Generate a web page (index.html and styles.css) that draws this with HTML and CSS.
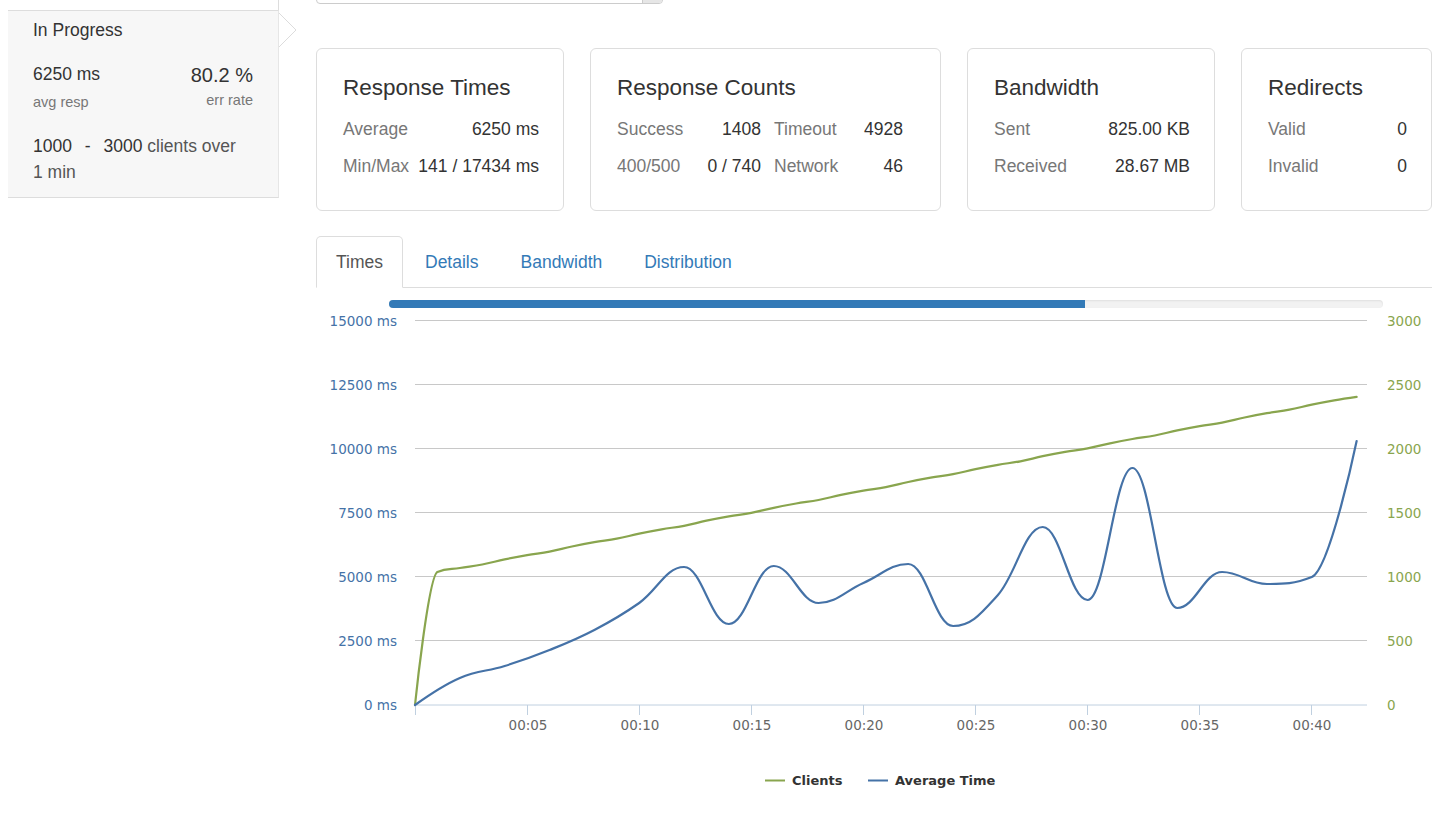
FILE: index.html
```html
<!DOCTYPE html>
<html lang="en">
<head>
<meta charset="utf-8">
<title>Load test – In Progress</title>
<link rel="stylesheet" href="styles.css">
</head>
<body>
<div class="page">
  <aside class="sidebar">
    <div class="test-item test-item--prev"></div>
    <div class="test-item test-item--active">
      <div class="test-status">In Progress</div>
      <div class="test-stats">
        <div class="stat">
          <div class="stat-value">6250 ms</div>
          <div class="stat-label">avg resp</div>
        </div>
        <div class="stat stat--right">
          <div class="stat-value stat-value--big">80.2 %</div>
          <div class="stat-label stat-label--right">err rate</div>
        </div>
      </div>
      <div class="test-clients"><span class="num">1000</span> <span class="dash">-</span> <span class="num">3000</span> <span class="muted">clients over</span> <span class="muted">1&nbsp;min</span></div>
      <svg class="chevron" width="20" height="38" viewBox="0 0 20 38"><polyline points="1,0 18,17 1,34" fill="#fff" stroke="#dcdcdc" stroke-width="1"/></svg>
    </div>
  </aside>

  <main class="main">
    <div class="search"><span class="search-btn"></span></div>

    <section class="cards">
      <div class="card">
        <h3 class="card-title">Response Times</h3>
        <div class="card-grid">
          <span class="label">Average</span><span class="value">6250 ms</span>
          <span class="label">Min/Max</span><span class="value">141 / 17434 ms</span>
        </div>
      </div>
      <div class="card card--counts">
        <h3 class="card-title">Response Counts</h3>
        <div class="card-grid card-grid--counts">
          <span class="label">Success</span><span class="value">1408</span>
          <span class="label label--pad">Timeout</span><span class="value">4928</span>
          <span class="label">400/500</span><span class="value">0 / 740</span>
          <span class="label label--pad">Network</span><span class="value">46</span>
        </div>
      </div>
      <div class="card">
        <h3 class="card-title">Bandwidth</h3>
        <div class="card-grid">
          <span class="label">Sent</span><span class="value">825.00 KB</span>
          <span class="label">Received</span><span class="value">28.67 MB</span>
        </div>
      </div>
      <div class="card">
        <h3 class="card-title">Redirects</h3>
        <div class="card-grid">
          <span class="label">Valid</span><span class="value">0</span>
          <span class="label">Invalid</span><span class="value">0</span>
        </div>
      </div>
    </section>

    <ul class="tabs">
      <li class="tab"><a class="tab-link tab-link--active" href="#">Times</a></li>
      <li class="tab"><a class="tab-link" href="#">Details</a></li>
      <li class="tab"><a class="tab-link" href="#">Bandwidth</a></li>
      <li class="tab"><a class="tab-link" href="#">Distribution</a></li>
    </ul>

    <div class="progress"><div class="progress-bar" style="width:70%"></div></div>

    <svg class="chart" width="1116" height="500" viewBox="316 308 1116 500">
      <g class="grid" stroke="#c8c8c8" stroke-width="1" fill="none">
        <path d="M415 320.5H1367M415 384.5H1367M415 448.5H1367M415 512.5H1367M415 576.5H1367M415 640.5H1367"/>
      </g>
      <g class="xaxis" stroke="#c0d0e0" stroke-width="1" fill="none">
        <path d="M415 705H1367"/>
        <path d="M415.5 705V715M527.5 705V715M639.5 705V715M751.5 705V715M863.5 705V715M975.5 705V715M1087.5 705V715M1199.5 705V715M1311.5 705V715"/>
      </g>
      <g class="axis-labels" fill="#4572a7" text-anchor="end">
        <text x="397" y="325.7">15000 ms</text>
        <text x="397" y="389.7">12500 ms</text>
        <text x="397" y="453.7">10000 ms</text>
        <text x="397" y="517.7">7500 ms</text>
        <text x="397" y="581.7">5000 ms</text>
        <text x="397" y="645.7">2500 ms</text>
        <text x="397" y="709.7">0 ms</text>
      </g>
      <g class="axis-labels" fill="#89a54e">
        <text x="1387" y="325.7">3000</text>
        <text x="1387" y="389.7">2500</text>
        <text x="1387" y="453.7">2000</text>
        <text x="1387" y="517.7">1500</text>
        <text x="1387" y="581.7">1000</text>
        <text x="1387" y="645.7">500</text>
        <text x="1387" y="709.7">0</text>
      </g>
      <g class="axis-labels" fill="#666" text-anchor="middle">
        <text x="528" y="730">00:05</text>
        <text x="640" y="730">00:10</text>
        <text x="752" y="730">00:15</text>
        <text x="864" y="730">00:20</text>
        <text x="976" y="730">00:25</text>
        <text x="1088" y="730">00:30</text>
        <text x="1200" y="730">00:35</text>
        <text x="1312" y="730">00:40</text>
      </g>
      <path id="clients" class="series" stroke="#89a54e" d=""/>
      <path id="avg" class="series" stroke="#4572a7" d=""/>
      <g class="legend">
        <path d="M765 780.5H785" stroke="#89a54e" stroke-width="2"/>
        <text x="792" y="785">Clients</text>
        <path d="M868 780.5H888" stroke="#4572a7" stroke-width="2"/>
        <text x="895" y="785">Average Time</text>
      </g>
    </svg>
  </main>
</div>
<script src="script.js"></script>
</body>
</html>
```

FILE: styles.css
```css
* { box-sizing: border-box; }
html, body { margin: 0; padding: 0; overflow: hidden; }
body {
  font-family: "Liberation Sans", Arial, Helvetica, sans-serif;
  font-size: 17.5px;
  color: #333;
  background: #fff;
}
.page {
  display: flex;
  align-items: flex-start;
  gap: 37px;
  padding-left: 8px;
}

/* sidebar */
.sidebar { width: 271px; flex: none; }
.test-item--prev { height: 10px; border-right: 1px solid #ddd; }
.test-item--active {
  position: relative;
  background: #f7f7f7;
  border-top: 1px solid #ddd;
  border-bottom: 1px solid #ddd;
  border-right: 1px solid #e6e6e6;
  padding: 6.5px 25px 12px 25px;
}
.test-status { line-height: 25px; }
.test-stats {
  display: flex;
  justify-content: space-between;
  margin-top: 19px;
}
.stat-value { line-height: 25px; }
.stat-value--big { font-size: 20px; padding-top: 1.4px; }
.stat-label {
  font-size: 14.5px;
  line-height: 20px;
  color: #777;
  margin-top: 5.8px;
}
.stat-label--right { text-align: right; margin-top: 2.4px; }
.test-clients {
  margin-top: 20.3px;
  line-height: 26px;
  color: #333;
}
.test-clients .muted { color: #555; }
.test-clients .dash { margin: 0 8px; }
.chevron {
  position: absolute;
  left: 100%;
  top: 2px;
  display: block;
}

/* main */
.main { width: 1116px; flex: none; }
.search {
  width: 347px;
  height: 34px;
  margin-top: -30px;
  border: 1px solid #ccc;
  border-radius: 4px;
  display: flex;
  justify-content: flex-end;
  background: #fff;
}
.search-btn {
  width: 20px;
  background: #e6e6e6;
  border-left: 1px solid #ccc;
  border-radius: 0 3px 3px 0;
}

.cards {
  display: grid;
  grid-template-columns: 248px 351px 248px 191px;
  gap: 26px;
  margin-top: 44px;
}
.card {
  border: 1px solid #ddd;
  border-radius: 6px;
  padding: 25.5px 24px 25.5px 26px;
}
.card--counts { padding-right: 37px; }
.card-title {
  margin: 0 0 11px;
  font-size: 22.5px;
  line-height: 25px;
  font-weight: normal;
  color: #333;
}
.card-grid {
  display: grid;
  grid-template-columns: 1fr auto;
  line-height: 37px;
  white-space: nowrap;
}
.card-grid--counts { grid-template-columns: 81px 63px 91px 51px; }
.label { color: #777; }
.label--pad { padding-left: 13px; }
.value { text-align: right; color: #333; }

/* tabs */
.tabs {
  list-style: none;
  margin: 25px 0 0;
  padding: 0;
  display: flex;
  border-bottom: 1px solid #ddd;
}
.tab { margin-right: 2px; margin-bottom: -1px; }
.tab-link {
  display: block;
  padding: 12.5px 19px;
  line-height: 25px;
  border: 1px solid transparent;
  border-radius: 5px 5px 0 0;
  color: #337ab7;
  text-decoration: none;
}
.tab-link--active {
  color: #555;
  background: #fff;
  border-color: #ddd #ddd transparent;
}

/* progress */
.progress {
  margin: 12px 0 0 73px;
  width: 994px;
  height: 8px;
  border-radius: 4px;
  background: #f2f2f2;
  box-shadow: inset 0 1px 2px rgba(0, 0, 0, 0.08);
  overflow: hidden;
}
.progress-bar { height: 100%; background: #337ab7; }

/* chart */
.chart {
  display: block;
  font-family: "DejaVu Sans", Verdana, sans-serif;
  font-size: 13.5px;
}
.series { fill: none; stroke-width: 2.2; stroke-linejoin: round; stroke-linecap: round; }
.legend { font-size: 13px; }
.legend text { font-weight: bold; fill: #333; }
```

FILE: script.js
```js
(function () {
  var x0 = 415, dx = 22.42;
  var avg = [705, 678, 666, 650, 630, 603, 567, 624, 566, 603, 583, 564, 626, 595, 527, 600, 468, 608, 572, 584, 577, 441];
  var clients = [705, 572];
  for (var t = 2; t <= 42; t++) clients.push(568 - 4.3 * (t - 2) + (t % 3 === 0 ? 0.8 : 0));

  function pts(arr, step) {
    return arr.map(function (y, i) { return [x0 + i * step * dx, y]; });
  }

  function spline(p) {
    var s = 1.5, d = 2.5;
    var path = 'M' + p[0][0].toFixed(2) + ' ' + p[0][1].toFixed(2);
    var prevR = null;
    for (var i = 1; i < p.length; i++) {
      var x = p[i][0], y = p[i][1];
      var lx = x, ly = y, rx = null, ry = null;
      if (i < p.length - 1) {
        var px = p[i - 1][0], py = p[i - 1][1], nx = p[i + 1][0], ny = p[i + 1][1];
        lx = (s * x + px) / d; ly = (s * y + py) / d;
        rx = (s * x + nx) / d; ry = (s * y + ny) / d;
        var c = 0;
        if (rx !== lx) c = ((ry - ly) * (rx - x)) / (rx - lx) + y - ry;
        ly += c; ry += c;
        if (ly > py && ly > y) { ly = Math.max(py, y); ry = 2 * y - ly; }
        else if (ly < py && ly < y) { ly = Math.min(py, y); ry = 2 * y - ly; }
        if (ry > ny && ry > y) { ry = Math.max(ny, y); ly = 2 * y - ry; }
        else if (ry < ny && ry < y) { ry = Math.min(ny, y); ly = 2 * y - ry; }
      }
      var c1 = prevR || p[i - 1];
      path += ' C' + c1[0].toFixed(2) + ' ' + c1[1].toFixed(2) + ' ' +
        lx.toFixed(2) + ' ' + ly.toFixed(2) + ' ' + x.toFixed(2) + ' ' + y.toFixed(2);
      prevR = rx !== null ? [rx, ry] : null;
    }
    return path;
  }

  document.getElementById('avg').setAttribute('d', spline(pts(avg, 2)));
  document.getElementById('clients').setAttribute('d', spline(pts(clients, 1)));
})();
```
